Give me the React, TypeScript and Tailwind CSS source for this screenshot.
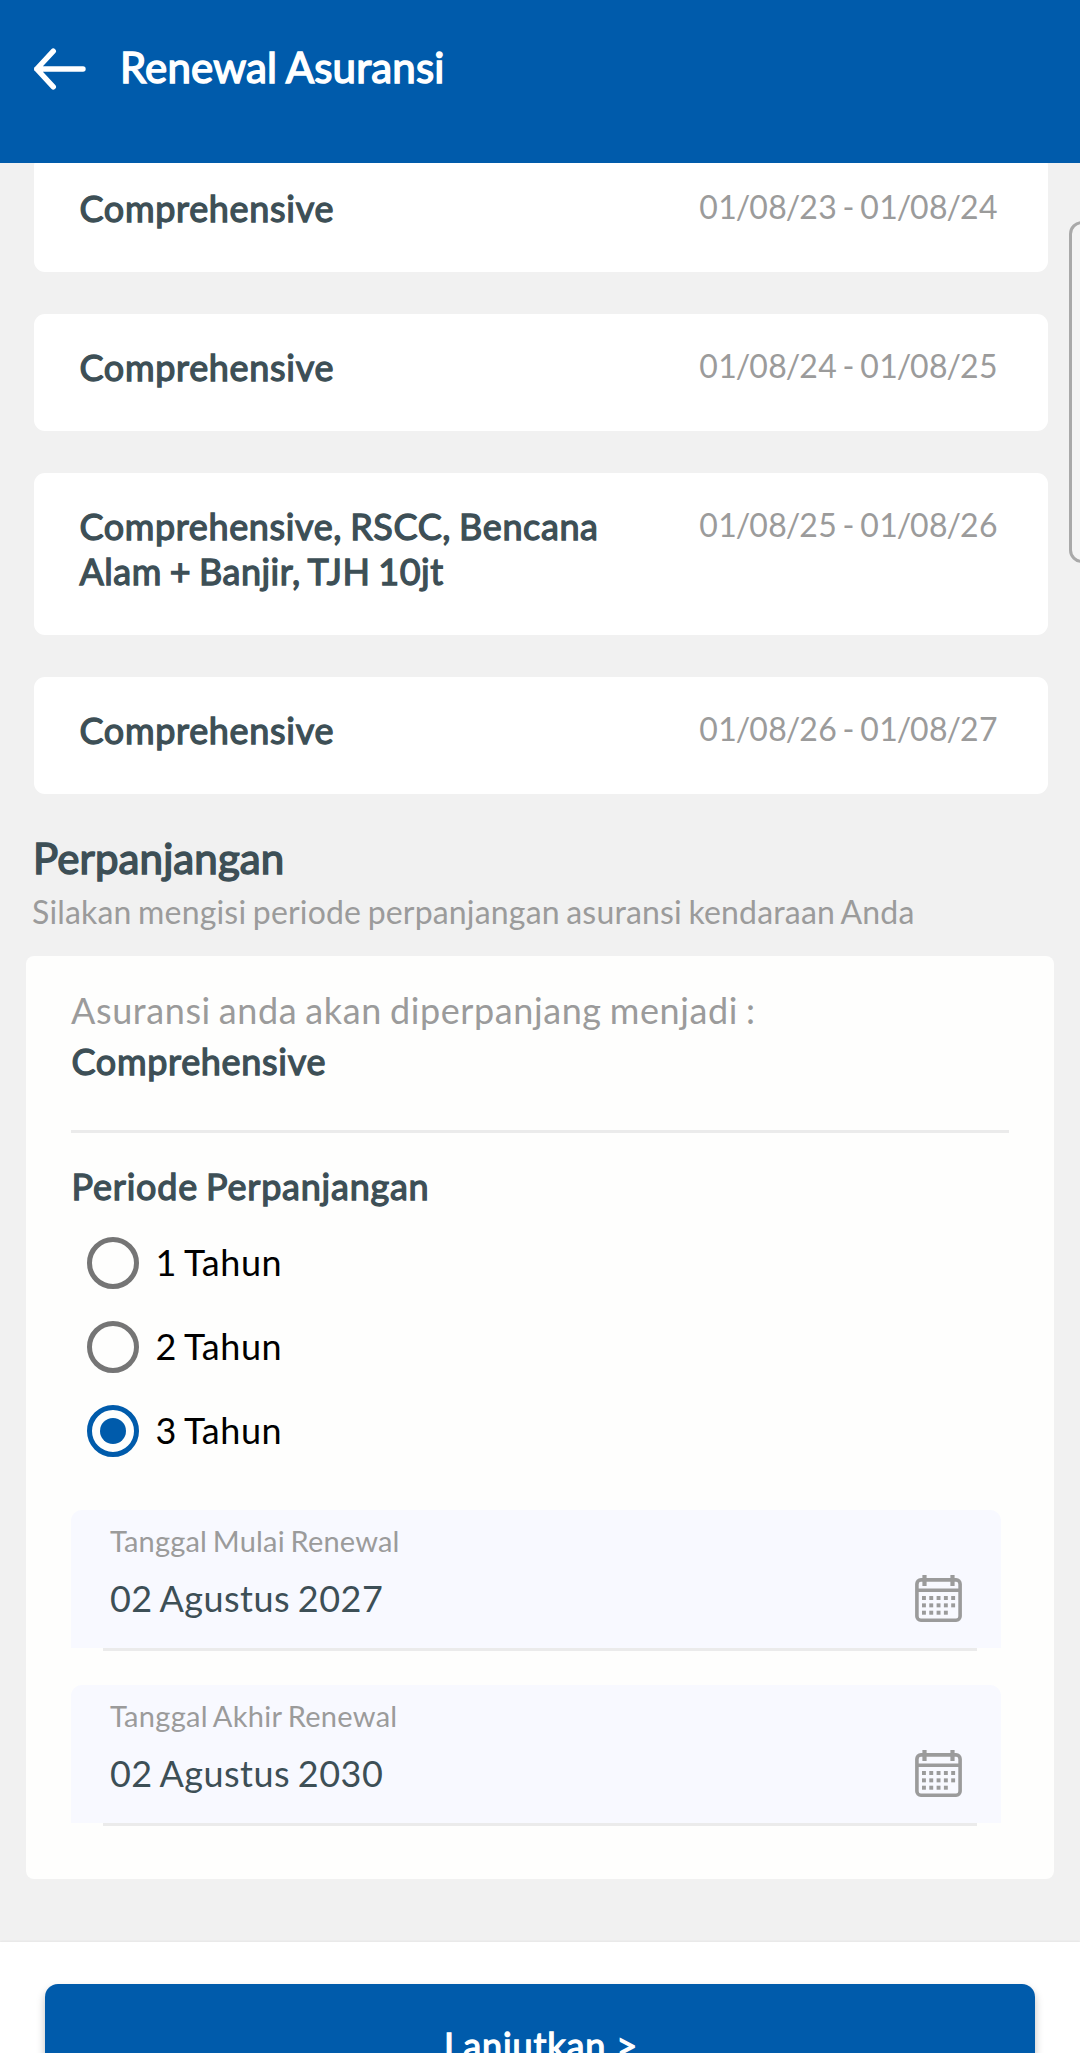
const policies = [
  { lines: [{ text: "Comprehensive", tracking: "tracking-[0.68px]" }], start: "01/08/23", end: "01/08/24" },
  { lines: [{ text: "Comprehensive", tracking: "tracking-[0.68px]" }], start: "01/08/24", end: "01/08/25" },
  {
    lines: [
      { text: "Comprehensive, RSCC, Bencana", tracking: "tracking-[0.62px]" },
      { text: "Alam + Banjir, TJH 10jt", tracking: "tracking-[0.5px]" },
    ],
    start: "01/08/25",
    end: "01/08/26",
  },
  { lines: [{ text: "Comprehensive", tracking: "tracking-[0.68px]" }], start: "01/08/26", end: "01/08/27" },
];

const periods = ["1 Tahun", "2 Tahun", "3 Tahun"];

function BackArrow() {
  return (
    <svg className="mt-[46px] ml-[32px] h-[46px] w-[56px]" viewBox="0 0 56 46" fill="none" stroke="white" strokeWidth="5.4" strokeLinecap="round" strokeLinejoin="round">
      <path d="M51 23H4.7M21.3 5.2L4.7 23L21.3 40.8" />
    </svg>
  );
}

function CalendarIcon() {
  const dots = [0, 1, 2].flatMap((r) => [0, 1, 2, 3, 4].filter((c) => r < 2 || c < 4).map((c) => ({ r, c })));
  return (
    <svg className="mt-[65px] mr-[39px] h-[47px] w-[47px] shrink-0" viewBox="0 0 47 47" fill="none">
      <rect x="1.9" y="4.9" width="43.2" height="40.3" rx="4" stroke="#9b9b9b" strokeWidth="3.6" />
      <path d="M2 15.3H45" stroke="#9b9b9b" strokeWidth="3.5" />
      <path d="M9.5 0V11M37.5 0V11" stroke="#9b9b9b" strokeWidth="4.2" />
      {dots.map(({ r, c }) => (
        <rect key={`${r}-${c}`} x={7 + c * 7.3} y={21 + r * 7.35} width="3.9" height="4" fill="#9b9b9b" />
      ))}
    </svg>
  );
}

/* A date whose slashes are kerned tightly against the digits. */
function SlashDate({ date }: { date: string }) {
  return (
    <>
      {date.split("/").map((part, i) => (
        <span key={i}>
          {i > 0 && <span className="-mx-[1.5px]">/</span>}
          {part}
        </span>
      ))}
    </>
  );
}

function DateField({ label, value, tracking }: { label: string; value: string; tracking: string }) {
  return (
    <div className="w-[930px]">
      <div className="flex h-[138px] justify-between rounded-t-[11px] bg-[#f8f9ff]">
        <div className="pt-[13px] pl-[39px]">
          <p className={`text-[29px] leading-[35px] text-[#9b9b9b] ${tracking}`}>{label}</p>
          <p className="mt-[18px] text-[36px] leading-[44px] tracking-[0.47px] text-[#3d4f56]">{value}</p>
        </div>
        <CalendarIcon />
      </div>
      <div className="mr-[24px] ml-[32px] h-[3px] bg-[#ebebeb]" />
    </div>
  );
}

export default function App() {
  return (
    <div className="relative flex h-[2053px] w-[1080px] flex-col overflow-hidden bg-[#f1f1f1] font-[Lato,sans-serif] whitespace-nowrap [word-spacing:-1.8px]">
      <header className="z-10 flex h-[163px] shrink-0 items-start bg-[#005bab]">
        <BackArrow />
        <h1 className="mt-[42px] ml-[32px] text-[42px] leading-[50px] font-normal tracking-[0.16px] text-white [word-spacing:-1px] [-webkit-text-stroke:1.5px_currentColor]">Renewal Asuransi</h1>
      </header>

      <section className="-mt-[8px] mr-[32px] ml-[34px] flex flex-col gap-[42px]">
        {policies.map((p) => (
          <article key={p.start} className="flex justify-between rounded-[11px] bg-white pt-[31px] pr-[50px] pb-[41px] pl-[45.5px]">
            <div className="text-[36px] leading-[45px] text-[#3d4f56] [-webkit-text-stroke:1.3px_currentColor]">
              {p.lines.map((l) => (
                <p key={l.text} className={l.tracking}>{l.text}</p>
              ))}
            </div>
            <p className="mt-px h-[39px] text-[32px] leading-[39px] tracking-[0.44px] text-[#9b9b9b]">
              <SlashDate date={p.start} />
              <span className="-mx-[1.5px]"> - </span>
              <SlashDate date={p.end} />
            </p>
          </article>
        ))}
      </section>

      <h2 className="mt-[39px] ml-[33px] text-[42px] leading-[50px] font-normal tracking-[0.12px] text-[#3d4f56] [-webkit-text-stroke:1.5px_currentColor]">Perpanjangan</h2>
      <p className="mt-[9px] ml-[32px] text-[32px] leading-[39px] tracking-[0.17px] text-[#9b9b9b]">Silakan mengisi periode perpanjangan asuransi kendaraan Anda</p>

      <section className="mt-[25px] mr-[26px] ml-[26px] h-[923px] shrink-0 rounded-[8px] bg-[#fefefd] pt-[32px] pl-[45px]">
        <p className="text-[36px] leading-[44px] tracking-[0.6px] text-[#9b9b9b]">Asuransi anda akan diperpanjang menjadi :</p>
        <p className="mt-[7px] pl-[0.5px] text-[36px] leading-[44px] tracking-[0.68px] text-[#3d4f56] [-webkit-text-stroke:1.3px_currentColor]">Comprehensive</p>
        <div className="mt-[47px] h-[3px] w-[938px] bg-[#ebebeb]" />
        <p className="mt-[31px] pl-[0.6px] text-[36px] leading-[44px] tracking-[0.76px] text-[#3d4f56] [-webkit-text-stroke:1.3px_currentColor]">Periode Perpanjangan</p>
        <div className="mt-[13px] flex flex-col" role="radiogroup">
          {periods.map((label) => {
            const checked = label === "3 Tahun";
            return (
              <label key={label} className="flex h-[84px] items-center gap-[16.5px] pl-[15.5px]">
                <span className={`flex size-[52.6px] items-center justify-center rounded-full border-[5px] ${checked ? "border-[#005bab]" : "border-[#757575]"}`}>
                  {checked && <span className="size-[26.6px] rounded-full bg-[#005bab]" />}
                </span>
                <span className="pb-[2px] text-[36px] leading-[44px] tracking-[0.6px] text-black">{label}</span>
              </label>
            );
          })}
        </div>
        <div className="mt-[37px] flex flex-col gap-[34px]">
          <DateField label="Tanggal Mulai Renewal" value="02 Agustus 2027" tracking="tracking-[0.18px]" />
          <DateField label="Tanggal Akhir Renewal" value="02 Agustus 2030" tracking="tracking-[0.3px]" />
        </div>
      </section>

      <footer className="mt-[63px] h-[111px] shrink-0 bg-white px-[45px] pt-[42px] shadow-[0_-1px_2px_rgba(0,0,0,0.05)]">
        <button className="flex h-[132px] w-[990px] items-start justify-center rounded-[13px] bg-[#005bab] pt-[39px] pl-[2px] text-[36px] leading-[44px] tracking-[0.87px] text-white shadow-[0_5px_8px_rgba(0,0,0,0.25)] [-webkit-text-stroke:1.3px_currentColor]">Lanjutkan &gt;</button>
      </footer>

      <div className="absolute top-[221px] left-[1069px] h-[342px] w-[40px] rounded-[13px] border-[3px] border-[#a9a9a9] bg-[#f4f4f4]" />
    </div>
  );
}
